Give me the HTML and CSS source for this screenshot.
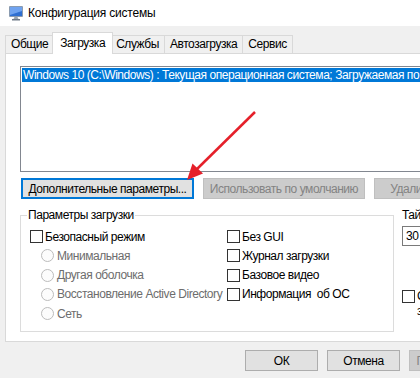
FILE: index.html
```html
<!DOCTYPE html>
<html lang="ru">
<head>
  <meta charset="UTF-8">
  <title>Конфигурация системы</title>
  <link rel="stylesheet" href="styles.css">
</head>
<body>
  <div class="window">
    <div class="titlebar">
      <svg class="app-icon" width="16" height="16" viewBox="0 0 16 16">
        <rect x="1" y="1" width="14" height="11" rx="1" fill="#8a9bb0"/>
        <rect x="2" y="2" width="12" height="9" fill="#2f6fd1"/>
        <path d="M2 2h12v4L2 10z" fill="#6fa3f0"/>
        <path d="M5 15l1.5-3h3l1.5 3z" fill="#9aa4b0"/>
        <rect x="4" y="14" width="8" height="1.5" fill="#6f7a88"/>
      </svg>
      <span class="title">Конфигурация системы</span>
    </div>
    <div class="client">
      <div class="tabs">
        <div class="tab">Общие</div>
        <div class="tab active">Загрузка</div>
        <div class="tab">Службы</div>
        <div class="tab">Автозагрузка</div>
        <div class="tab">Сервис</div>
      </div>
      <div class="tab-page">
        <div class="os-list">
          <div class="os-item selected">Windows 10 (C:\Windows) : Текущая операционная система; Загружаемая по умолчанию ОС</div>
        </div>
        <div class="button-row">
          <button class="btn btn-advanced focused">Дополнительные параметры...</button>
          <button class="btn btn-default" disabled>Использовать по умолчанию</button>
          <button class="btn btn-delete" disabled>Удалить</button>
        </div>
        <div class="options">
          <fieldset class="boot-options">
            <legend>Параметры загрузки</legend>
            <div class="opt-cols">
              <div class="opt-col left">
                <label class="check"><span class="box"></span>Безопасный режим</label>
                <label class="radio disabled"><span class="circle"></span>Минимальная</label>
                <label class="radio disabled"><span class="circle"></span>Другая оболочка</label>
                <label class="radio disabled"><span class="circle"></span>Восстановление Active Directory</label>
                <label class="radio disabled"><span class="circle"></span>Сеть</label>
              </div>
              <div class="opt-col">
                <label class="check"><span class="box"></span>Без GUI</label>
                <label class="check"><span class="box"></span>Журнал загрузки</label>
                <label class="check"><span class="box"></span>Базовое видео</label>
                <label class="check"><span class="box"></span>Информация&nbsp; об ОС</label>
              </div>
            </div>
          </fieldset>
          <div class="timeout">
            <div class="timeout-label">Таймаут:</div>
            <div class="timeout-field"><span class="input">30</span><span>сек.</span></div>
            <label class="check wrap"><span class="box"></span><span>Сделать эти<br>загрузки постоянными</span></label>
          </div>
        </div>
      </div>
      <div class="dialog-buttons">
        <button class="btn btn-dialog">ОК</button>
        <button class="btn btn-dialog">Отмена</button>
        <button class="btn btn-dialog" disabled>Применить</button>
      </div>
    </div>
    <svg class="arrow" width="420" height="378" viewBox="0 0 420 378">
      <line x1="255" y1="112" x2="196" y2="170" stroke="#e5202a" stroke-width="2.5"/>
      <polygon points="187,180 192.5,163.5 203,173.5" fill="#e5202a"/>
    </svg>
  </div>
</body>
</html>
```

FILE: styles.css
```css
body {
  margin: 0;
  width: 420px;
  height: 378px;
  overflow: hidden;
  font-family: "Liberation Sans", Arial, sans-serif;
  font-size: 12px;
  letter-spacing: -0.45px;
  color: #000;
  background: #f0f0f0;
}
.window {
  position: relative;
  width: 520px;
  height: 378px;
}
.titlebar {
  height: 26px;
  background: #fff;
  display: flex;
  align-items: center;
  padding-left: 8px;
}
.app-icon {
  margin-right: 4px;
}
.title {
  letter-spacing: -0.2px;
}
.client {
  background: #f0f0f0;
  padding-top: 6px;
}
.tabs {
  display: flex;
  align-items: flex-end;
  padding-left: 5px;
  height: 21px;
}
.tab {
  height: 18px;
  line-height: 17px;
  padding: 0 5px;
  border: 1px solid #d9d9d9;
  border-bottom: none;
  border-left: none;
  box-sizing: border-box;
  background: #f0f0f0;
}
.tab:first-child {
  border-left: 1px solid #d9d9d9;
}
.tab.active {
  height: 22px;
  line-height: 20px;
  background: #fff;
  border-left: 1px solid #d9d9d9;
  margin: 0 -2px -1px -2px;
  padding: 0 7px;
  position: relative;
  z-index: 1;
}
.tab.active + .tab {
  border-left: none;
}
.tab-page {
  margin-left: 5px;
  height: 289px;
  box-sizing: border-box;
  border: 1px solid #d9d9d9;
  background: #fff;
  padding: 12px 0 0 14px;
}
.os-list {
  height: 106px;
  box-sizing: border-box;
  border: 1px solid #828790;
  padding: 1px;
  width: 460px;
}
.os-item {
  height: 14px;
  line-height: 14px;
  padding-left: 1px;
  white-space: nowrap;
  overflow: hidden;
}
.os-item.selected {
  background: #0078d7;
  color: #fff;
}
.button-row {
  display: flex;
  gap: 9px;
  margin-top: 6px;
  margin-left: 1px;
}
.btn {
  height: 21px;
  box-sizing: border-box;
  border: 1px solid #adadad;
  background: #e1e1e1;
  font-family: inherit;
  font-size: 12px;
  letter-spacing: inherit;
  color: #000;
  padding: 0;
  white-space: nowrap;
  flex: none;
}
.btn.focused {
  border: 2px solid #0078d7;
}
.btn:disabled {
  background: #cccccc;
  border-color: #bfbfbf;
  color: #838383;
}
.btn-advanced { width: 173px; }
.btn-default { width: 162px; }
.btn-delete { width: 75px; }
.options {
  display: flex;
  gap: 8px;
  margin-top: 9px;
}
.boot-options {
  width: 374px;
  height: 124px;
  box-sizing: border-box;
  margin: 0;
  padding: 0;
  border: 1px solid #dcdcdc;
  flex: none;
}
.boot-options legend {
  margin-left: 6px;
  padding: 0 1px;
  line-height: 14px;
}
.opt-cols {
  display: flex;
  padding: 5px 0 0 9px;
}
.opt-col {
  display: flex;
  flex-direction: column;
}
.opt-col.left {
  width: 197px;
}
.check, .radio {
  display: flex;
  align-items: center;
  height: 19.25px;
  white-space: nowrap;
}
.box {
  width: 13px;
  height: 13px;
  box-sizing: border-box;
  border: 1px solid #333;
  background: #fff;
  margin-right: 2px;
  flex: none;
}
.radio {
  padding-left: 11px;
}
.circle {
  width: 13px;
  height: 13px;
  box-sizing: border-box;
  border: 1px solid #bcbcbc;
  border-radius: 50%;
  background: #fcfcfc;
  margin-right: 3px;
  flex: none;
}
.radio.disabled {
  color: #6d6d6d;
}
.timeout {
  display: flex;
  flex-direction: column;
  flex: none;
}
.timeout-label {
  line-height: 14px;
}
.timeout-field {
  display: flex;
  align-items: center;
  gap: 6px;
  margin-top: 4px;
}
.input {
  width: 40px;
  height: 20px;
  line-height: 18px;
  box-sizing: border-box;
  border: 1px solid #7a7a7a;
  background: #fff;
  padding-left: 3px;
}
.check.wrap {
  align-items: flex-start;
  height: auto;
  line-height: 15px;
  margin-top: 43px;
}
.check.wrap .box {
  margin-top: 1px;
}
.dialog-buttons {
  display: flex;
  gap: 9px;
  margin: 8px 0 0 245px;
}
.btn-dialog {
  width: 73px;
}
.arrow {
  position: absolute;
  left: 0;
  top: 0;
  pointer-events: none;
}
```
